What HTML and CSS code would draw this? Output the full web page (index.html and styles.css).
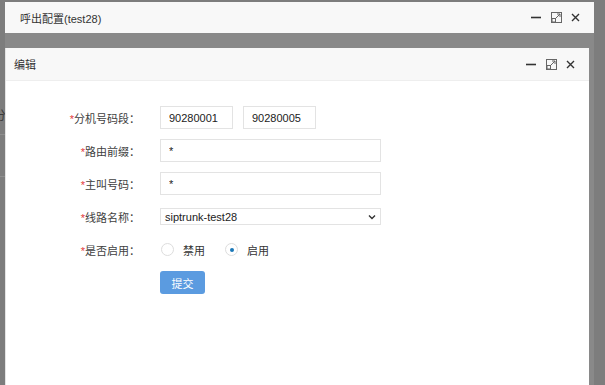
FILE: index.html
```html
<!DOCTYPE html>
<html>
<head>
    <meta charset="utf-8">
    <title>编辑</title>
    <link rel="stylesheet" href="styles.css">
</head>
<body>
    <div class="desk">
        <div class="under-line line-a"></div>
        <div class="under-line line-b"></div>
        <span class="under-text">分</span>

        <!-- 外层窗口 -->
        <div class="win outer">
            <div class="win-head">
                <span class="win-title">呼出配置(test28)</span>
                <div class="win-tools">
                    <svg class="tool" viewBox="0 0 11 11"><path d="M0 5.5h10" stroke="#333" stroke-width="1.6"/></svg>
                    <svg class="tool" viewBox="0 0 11 11"><rect x="0.5" y="0.5" width="10" height="10" fill="none" stroke="#666"/><rect x="1" y="6.5" width="3.5" height="3.5" fill="none" stroke="#666"/><path d="M4.5 6.5l4.5-4.5M6 2h3v3" fill="none" stroke="#666"/></svg>
                    <svg class="tool x" viewBox="0 0 9 9"><path d="M1 1l7 7M8 1l-7 7" stroke="#333" stroke-width="1.4"/></svg>
                </div>
            </div>
            <div class="win-dim"></div>
        </div>

        <!-- 编辑窗口 -->
        <div class="win inner">
            <div class="win-head">
                <span class="win-title">编辑</span>
                <div class="win-tools">
                    <svg class="tool" viewBox="0 0 11 11"><path d="M0 5.5h10" stroke="#333" stroke-width="1.6"/></svg>
                    <svg class="tool" viewBox="0 0 11 11"><rect x="0.5" y="0.5" width="10" height="10" fill="none" stroke="#666"/><rect x="1" y="6.5" width="3.5" height="3.5" fill="none" stroke="#666"/><path d="M4.5 6.5l4.5-4.5M6 2h3v3" fill="none" stroke="#666"/></svg>
                    <svg class="tool x" viewBox="0 0 9 9"><path d="M1 1l7 7M8 1l-7 7" stroke="#333" stroke-width="1.4"/></svg>
                </div>
            </div>
            <form class="form">
                <div class="row">
                    <label class="lbl"><i>*</i>分机号码段：</label>
                    <input class="txt short" type="text" value="90280001">
                    <input class="txt short" type="text" value="90280005">
                </div>
                <div class="row">
                    <label class="lbl"><i>*</i>路由前缀：</label>
                    <input class="txt" type="text" value="*">
                </div>
                <div class="row">
                    <label class="lbl"><i>*</i>主叫号码：</label>
                    <input class="txt" type="text" value="*">
                </div>
                <div class="row">
                    <label class="lbl"><i>*</i>线路名称：</label>
                    <div class="sel">
                        <span>siptrunk-test28</span>
                        <svg width="8" height="6" viewBox="0 0 8 6"><path d="M1 1.5l3 3 3-3" fill="none" stroke="#333" stroke-width="1.4"/></svg>
                    </div>
                </div>
                <div class="row">
                    <label class="lbl"><i>*</i>是否启用：</label>
                    <span class="radio"></span><span class="radio-text">禁用</span>
                    <span class="radio on"></span><span class="radio-text">启用</span>
                </div>
                <div class="row">
                    <span class="lbl"></span>
                    <button type="button" class="btn">提交</button>
                </div>
            </form>
        </div>
    </div>
</body>
</html>
```

FILE: styles.css
```css
body {
    margin: 0;
    font-family: "Liberation Sans", "Noto Sans CJK SC", sans-serif;
    font-size: 11px;
    color: #333;
}
.desk {
    position: relative;
    width: 605px;
    height: 385px;
    overflow: hidden;
    background: #7d7d7d;
}
.under-line {
    position: absolute;
    left: 0;
    width: 5px;
    height: 1px;
    background: #8e8e8e;
}
.line-a { top: 134px; }
.line-b { top: 176px; }
.under-text {
    position: absolute;
    left: -6px;
    top: 106px;
    color: #3a3a3a;
    font-size: 12px;
}
.win {
    position: absolute;
    left: 5px;
}
.outer {
    top: 2px;
    width: 589px;
    height: 400px;
}
.outer .win-dim {
    height: 100%;
    background: #898989;
}
.inner {
    top: 48px;
    width: 584px;
    height: 345px;
    background: #fff;
    border-left: 1px solid #e4e4e4;
    box-sizing: border-box;
}
.win-head {
    height: 31px;
    display: flex;
    align-items: center;
    background: #f8f8f8;
    padding: 0 14px 0 15px;
}
.inner .win-head {
    height: 32px;
    border-bottom: 1px solid #eee;
    padding-left: 8px;
    padding-right: 14px;
}
.win-title {
    flex: 1;
    font-size: 11px;
    color: #333;
}
.win-tools {
    display: flex;
    gap: 9px;
    align-items: center;
}
.tool {
    width: 11px;
    height: 11px;
}
.tool.x {
    width: 9px;
    height: 9px;
}
.form {
    padding-top: 25px;
}
.row {
    height: 23px;
    margin-bottom: 10px;
    display: flex;
    align-items: center;
}
.lbl {
    width: 134px;
    margin-right: 20px;
    text-align: right;
    color: #404040;
}
.lbl i {
    font-style: normal;
    color: #e4393c;
}
.txt {
    box-sizing: border-box;
    width: 221px;
    height: 23px;
    border: 1px solid #e3e3e3;
    padding: 0 8px;
    font-family: inherit;
    font-size: 11px;
    color: #222;
    outline: none;
}
.txt.short {
    width: 73px;
    margin-right: 10px;
}
.sel {
    box-sizing: border-box;
    width: 221px;
    height: 17px;
    border: 1px solid #e3e3e3;
    display: flex;
    align-items: center;
    justify-content: space-between;
    padding: 0 4px;
    font-size: 11px;
    color: #222;
}
.radio {
    box-sizing: border-box;
    width: 13px;
    height: 13px;
    border: 1px solid #ddd;
    border-radius: 50%;
    margin-left: 1px;
    display: flex;
    align-items: center;
    justify-content: center;
}
.radio.on::after {
    content: "";
    width: 4px;
    height: 4px;
    border-radius: 50%;
    background: #1a78b8;
}
.radio-text {
    margin: 0 19px 0 9px;
    color: #333;
}
.btn {
    width: 45px;
    height: 23px;
    background: #5b9be0;
    color: #fff;
    border: none;
    border-radius: 3px;
    font-family: inherit;
    font-size: 11px;
    padding: 0;
}
```
